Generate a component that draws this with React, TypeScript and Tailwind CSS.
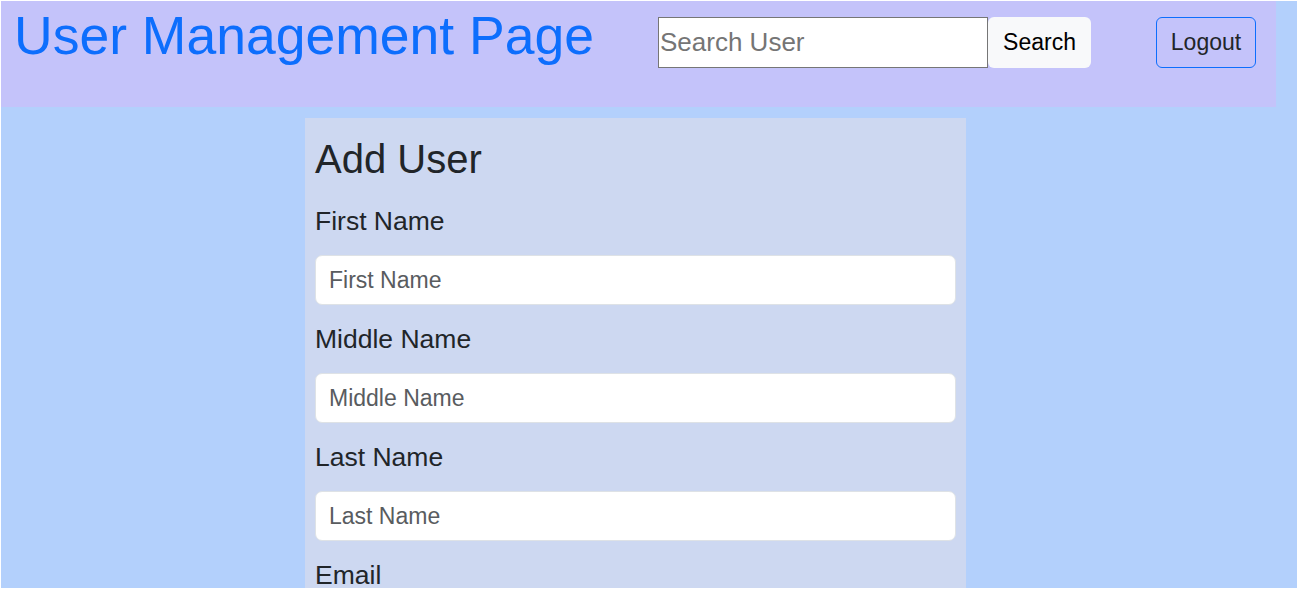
import React from 'react';

const fields = ['First Name', 'Middle Name', 'Last Name', 'Email'];

const App: React.FC = () => {
  return (
    <div className="w-[1300px] h-[589px] bg-white overflow-hidden" style={{ fontFamily: '"Liberation Sans", Arial, sans-serif' }}>
      <div className="ml-[1px] mt-[1px] w-[1296px] h-[587px] bg-[#b3d0fc] overflow-hidden">
        {/* Header */}
        <div className="w-[1275px] h-[106px] bg-[#c4c3fa] flex items-start pl-[13px]">
          <div className="w-[644px] pt-[3px]">
            <h1 className="text-[53.5px] leading-[64px] text-[#0d6efd] whitespace-nowrap">User Management Page</h1>
          </div>
          <div className="flex mt-[16px]">
            <input
              type="text"
              placeholder="Search User"
              className="w-[330px] h-[51px] bg-white border border-[#767676] px-[1px] text-[26px] text-black placeholder:text-[#757575] outline-none"
            />
            <button className="w-[103px] h-[51px] bg-[#f8f9fa] rounded-[6px] text-[23px] text-black">Search</button>
          </div>
          <button className="ml-[65px] mt-[16px] w-[100px] h-[51px] border border-[#0d6efd] rounded-[6px] text-[23px] text-[#212529]">
            Logout
          </button>
        </div>

        {/* Add user card */}
        <div className="ml-[304px] mt-[11px] w-[661px] h-[480px] bg-[#cdd8f1] pt-[10px] px-[10px]">
          <h2 className="mt-[9px] mb-[24px] text-[40px] leading-[44px] text-[#212529]">Add User</h2>
          <div className="flex flex-col gap-[18px]">
            {fields.map((f) => (
              <div key={f} className="flex flex-col gap-[18px]">
                <label className="text-[26.5px] leading-[32px] text-[#212529]">{f}</label>
                <input
                  type="text"
                  placeholder={f}
                  className="w-[641px] h-[50px] bg-white border border-[#dee2e6] rounded-[7px] px-[13px] text-[23px] text-[#212529] placeholder:text-[#595c5f] outline-none"
                />
              </div>
            ))}
          </div>
        </div>
      </div>
    </div>
  );
};

export default App;
